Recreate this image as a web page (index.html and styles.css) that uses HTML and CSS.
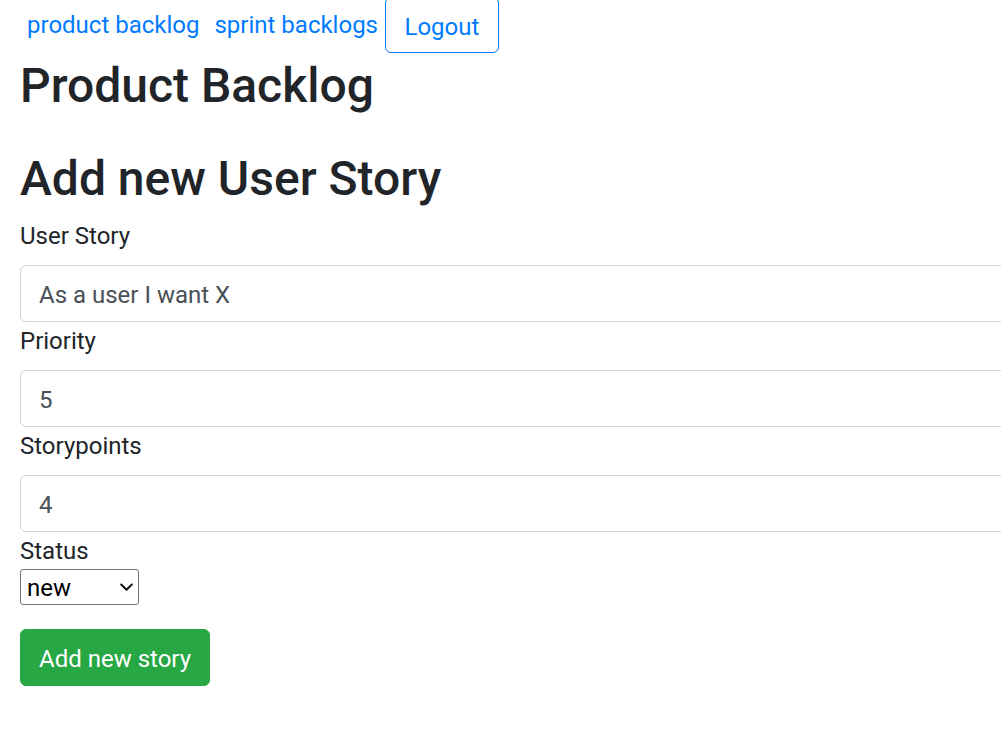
FILE: index.html
```html
<!DOCTYPE html>
<html lang="en">
<head>
<meta charset="utf-8">
<title>Product Backlog</title>
<link rel="stylesheet" href="styles.css">
</head>
<body>
<nav class="topnav">
  <a class="nav-link nav-link-first" href="#">product backlog</a>
  <a class="nav-link nav-link-last" href="#">sprint backlogs</a>
  <button class="btn btn-outline" type="button">Logout</button>
</nav>
<main class="page">
  <h1 class="title">Product Backlog</h1>
  <h2 class="subtitle">Add new User Story</h2>
  <form class="story-form">
    <div class="form-group">
      <label class="form-label" for="story">User Story</label>
      <input class="form-control" id="story" type="text" value="As a user I want X">
    </div>
    <div class="form-group">
      <label class="form-label" for="priority">Priority</label>
      <input class="form-control" id="priority" type="text" value="5">
    </div>
    <div class="form-group">
      <label class="form-label" for="points">Storypoints</label>
      <input class="form-control" id="points" type="text" value="4">
    </div>
    <div class="form-group">
      <label class="form-label status-label" for="status">Status</label>
      <span class="select-wrap">
        <select class="status-select" id="status">
          <option>new</option>
          <option>in progress</option>
          <option>done</option>
        </select>
        <svg class="select-arrow" width="13" height="9" viewBox="0 0 13 9" aria-hidden="true">
          <path d="M1.2 1.5 L6.5 6.8 L11.8 1.5" fill="none" stroke="#111" stroke-width="2" stroke-linecap="round" stroke-linejoin="round"/>
        </svg>
      </span>
    </div>
    <button class="btn btn-success" type="submit">Add new story</button>
  </form>
</main>
</body>
</html>
```

FILE: styles.css
```css
* {
  box-sizing: border-box;
}

html, body {
  margin: 0;
  padding: 0;
  background: #fff;
  overflow: hidden;
}

body {
  font-family: Roboto, "Helvetica Neue", Arial, sans-serif;
  font-size: 24px;
  line-height: 36px;
  color: #212529;
}

.topnav {
  display: flex;
  align-items: flex-start;
  padding-left: 19px;
  margin-top: -1px;
  height: 54px;
}

.nav-link {
  color: #007bff;
  text-decoration: none;
  padding: 8px 8px 0;
  line-height: 36px;
}

.nav-link-first {
  padding-right: 7px;
}

.nav-link-last {
  padding-right: 7px;
}

.btn {
  font-family: inherit;
  font-size: 24px;
  line-height: 36px;
  border-radius: 6px;
  cursor: pointer;
  margin: 0;
}

.btn-outline {
  background: #fff;
  color: #007bff;
  border: 1px solid #007bff;
  padding: 11px 18.5px 7px;
  margin-top: -2px;
}

.page {
  padding: 0 0 0 20px;
  margin-top: 4px;
}

.title,
.subtitle {
  font-size: 48px;
  font-weight: 500;
  line-height: 57.6px;
  margin: 0;
}

.title {
  margin-bottom: 35px;
}

.subtitle {
  margin-bottom: 10px;
}

.story-form {
  display: flex;
  flex-direction: column;
  align-items: flex-start;
}

.form-group {
  display: flex;
  flex-direction: column;
  align-items: flex-start;
}

.form-label {
  display: block;
  padding-top: 1px;
  margin-bottom: 11px;
}

.status-label {
  margin-bottom: 0;
}

.form-control {
  display: block;
  width: 1060px;
  height: 57px;
  padding: 10px 18px 8px;
  font-family: inherit;
  font-size: 24px;
  line-height: 36px;
  color: #495057;
  background: #fff;
  border: 1px solid #ced4da;
  border-radius: 6px;
  margin: 0;
}

.select-wrap {
  position: relative;
  display: block;
  width: 119px;
  height: 36px;
}

.status-select {
  -webkit-appearance: none;
  appearance: none;
  display: block;
  width: 119px;
  height: 36px;
  padding: 2px 24px 0 6px;
  font-family: inherit;
  font-size: 24px;
  line-height: 32px;
  margin: 0;
  color: #000;
  background: #fff;
  border: 1px solid #767676;
  border-radius: 3px;
}

.select-arrow {
  position: absolute;
  right: 6px;
  top: 14px;
  pointer-events: none;
}

.btn-success {
  margin-top: 24px;
  background: #28a745;
  color: #fff;
  border: 1px solid #28a745;
  padding: 10px 18px 8px;
  height: 57px;
}
```
